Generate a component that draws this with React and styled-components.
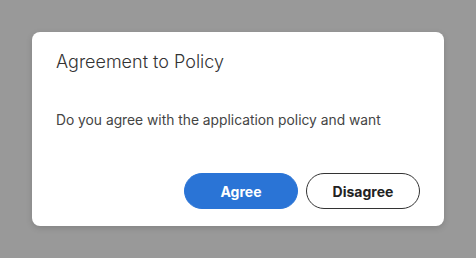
import styled, { createGlobalStyle } from "styled-components";

const Global = createGlobalStyle`
  html, body { margin: 0; padding: 0; background: #999999; }
  body { font-family: Inter, "Liberation Sans", sans-serif; }
`;

export default function App() {
  return (
    <>
      <Global />
      <Overlay>
        <Dialog>
          <Title>Agreement to Policy</Title>
          <Body>Do you agree with the application policy and want</Body>
          <Actions>
            <Button primary>Agree</Button>
            <Button>Disagree</Button>
          </Actions>
        </Dialog>
      </Overlay>
    </>
  );
}

const Overlay = styled.div`
  width: 476px;
  height: 258px;
  box-sizing: border-box;
  padding: 32px;
`;

const Dialog = styled.div`
  width: 412px;
  height: 194px;
  box-sizing: border-box;
  background: #ffffff;
  border-radius: 8px;
  box-shadow: 0 2px 6px rgba(0, 0, 0, 0.15);
  padding: 18px 24px 17px 24px;
  display: flex;
  flex-direction: column;
`;

const Title = styled.h2`
  margin: 0;
  font-family: Inter, "Noto Sans", sans-serif;
  font-weight: 300;
  font-size: 18px;
  line-height: 24px;
  color: #333333;
`;

const Body = styled.p`
  margin: 36px 0 0 0;
  font-family: Inter, "Noto Sans", sans-serif;
  font-size: 13.8px;
  line-height: 20px;
  color: #444444;
`;

const Actions = styled.div`
  margin-top: auto;
  display: flex;
  justify-content: flex-end;
  gap: 8px;
`;

const Button = styled.button`
  width: 114px;
  height: 36px;
  border-radius: 18px;
  box-sizing: border-box;
  font-family: Inter, "Liberation Sans", sans-serif;
  font-weight: 700;
  font-size: 14px;
  cursor: pointer;
  background: ${(p) => (p.primary ? "#2a74d6" : "#ffffff")};
  color: ${(p) => (p.primary ? "#ffffff" : "#222222")};
  border: 1px solid ${(p) => (p.primary ? "#2a74d6" : "#333333")};
`;
